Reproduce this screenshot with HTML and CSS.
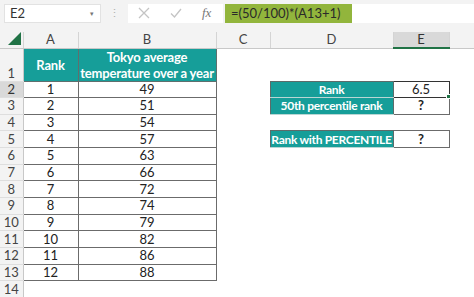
FILE: index.html
```html
<!DOCTYPE html>
<html lang="en">
<head>
    <meta charset="UTF-8">
    <meta name="viewport" content="width=device-width, initial-scale=1.0">
    <title>Percentile rank</title>
    <link rel="stylesheet" href="styles.css">
</head>
<body>
<div class="app">
    <div class="formula-bar">
        <div class="name-box">
            <span>E2</span>
            <span class="caret">&#9662;</span>
        </div>
        <div class="grip">&#8942;</div>
        <div class="fx-buttons">
            <svg width="12" height="12" viewBox="0 0 12 12"><path d="M1 1 L11 11 M11 1 L1 11" stroke="#c4c4c4" stroke-width="1.3" fill="none"/></svg>
            <svg width="12" height="12" viewBox="0 0 12 12"><path d="M1 6.5 L4.5 10 L11 2" stroke="#c4c4c4" stroke-width="1.3" fill="none"/></svg>
            <span class="fx">fx</span>
        </div>
        <div class="formula"><span class="formula-text">=(50/100)*(A13+1)</span></div>
    </div>

    <table class="sheet">
        <colgroup>
            <col class="c-rh">
            <col class="c-a">
            <col class="c-b">
            <col class="c-c">
            <col class="c-d">
            <col class="c-e">
            <col>
        </colgroup>
        <tr class="head-row">
            <th class="corner">
                <svg width="14" height="14" viewBox="0 0 14 14"><polygon points="13,0 13,13 0,13" fill="#217346"/></svg>
            </th>
            <th class="ch">A</th>
            <th class="ch">B</th>
            <th class="ch">C</th>
            <th class="ch">D</th>
            <th class="ch active">E</th>
            <th class="ch last"></th>
        </tr>
        <tr class="tall">
            <th class="rh">1</th>
            <td class="teal">Rank</td>
            <td class="teal">Tokyo average<br>temperature over a year</td>
            <td></td><td></td><td></td><td></td>
        </tr>
        <tr>
            <th class="rh active">2</th>
            <td class="data">1</td><td class="data">49</td>
            <td></td>
            <td class="teal label">Rank</td>
            <td class="value selected">6.5<span class="handle"></span></td>
            <td></td>
        </tr>
        <tr>
            <th class="rh">3</th>
            <td class="data">2</td><td class="data">51</td>
            <td></td>
            <td class="teal label">50th percentile rank</td>
            <td class="value bold">?</td>
            <td></td>
        </tr>
        <tr>
            <th class="rh">4</th>
            <td class="data">3</td><td class="data">54</td>
            <td></td><td></td><td></td><td></td>
        </tr>
        <tr>
            <th class="rh">5</th>
            <td class="data">4</td><td class="data">57</td>
            <td></td>
            <td class="teal label">Rank with PERCENTILE</td>
            <td class="value bold">?</td>
            <td></td>
        </tr>
        <tr>
            <th class="rh">6</th>
            <td class="data">5</td><td class="data">63</td>
            <td></td><td></td><td></td><td></td>
        </tr>
        <tr>
            <th class="rh">7</th>
            <td class="data">6</td><td class="data">66</td>
            <td></td><td></td><td></td><td></td>
        </tr>
        <tr>
            <th class="rh">8</th>
            <td class="data">7</td><td class="data">72</td>
            <td></td><td></td><td></td><td></td>
        </tr>
        <tr>
            <th class="rh">9</th>
            <td class="data">8</td><td class="data">74</td>
            <td></td><td></td><td></td><td></td>
        </tr>
        <tr>
            <th class="rh">10</th>
            <td class="data">9</td><td class="data">79</td>
            <td></td><td></td><td></td><td></td>
        </tr>
        <tr>
            <th class="rh">11</th>
            <td class="data">10</td><td class="data">82</td>
            <td></td><td></td><td></td><td></td>
        </tr>
        <tr>
            <th class="rh">12</th>
            <td class="data">11</td><td class="data">86</td>
            <td></td><td></td><td></td><td></td>
        </tr>
        <tr>
            <th class="rh">13</th>
            <td class="data">12</td><td class="data">88</td>
            <td></td><td></td><td></td><td></td>
        </tr>
        <tr>
            <th class="rh">14</th>
            <td></td><td></td><td></td><td></td><td></td><td></td>
        </tr>
    </table>
</div>
</body>
</html>
```

FILE: styles.css
```css
body {
    margin: 0;
    padding: 0;
    font-family: Lato, "Open Sans", sans-serif;
    background-color: #fff;
    color: #222;
}

.app {
    width: 474px;
    height: 297px;
    overflow: hidden;
    background-color: #fff;
}

/* formula bar */
.formula-bar {
    display: flex;
    align-items: center;
    height: 32px;
    padding: 0 0 6px 4px;
    box-sizing: border-box;
    background-color: #f3f3f3;
}

.name-box {
    display: flex;
    justify-content: space-between;
    align-items: center;
    width: 97px;
    height: 19px;
    padding: 0 6px 0 5px;
    box-sizing: border-box;
    background-color: #fff;
    border: 1px solid #e2e2e2;
    font-size: 13px;
    color: #333;
}

.caret {
    font-size: 7px;
    color: #777;
}

.grip {
    width: 27px;
    text-align: center;
    font-size: 11px;
    color: #b0b0b0;
}

.fx-buttons {
    display: flex;
    align-items: center;
    gap: 20px;
    width: 95px;
    height: 19px;
    padding-left: 10px;
    box-sizing: border-box;
    background-color: #fff;
}

.fx {
    font-family: "Liberation Serif", serif;
    font-style: italic;
    font-size: 13px;
    color: #777;
}

.formula {
    flex: 1;
    height: 19px;
    margin-left: 2px;
    background-color: #fff;
    display: flex;
    align-items: center;
}

.formula-text {
    display: block;
    width: 127px;
    height: 19px;
    line-height: 19px;
    padding-left: 6px;
    box-sizing: border-box;
    background-color: #92b53c;
    font-size: 13px;
    color: #2a2a2a;
}

/* sheet */
.sheet {
    width: 474px;
    table-layout: fixed;
    border-collapse: collapse;
    font-size: 13px;
}

.c-rh { width: 23px; }
.c-a { width: 55px; }
.c-b { width: 138px; }
.c-c { width: 54px; }
.c-d { width: 123px; }
.c-e { width: 56px; }

.sheet th,
.sheet td {
    padding: 0;
    text-align: center;
    vertical-align: middle;
    line-height: 15px;
    white-space: nowrap;
}

.sheet tr {
    height: 16.67px;
}

.sheet tr.head-row {
    height: 16px;
}

.sheet tr.tall {
    height: 33px;
}

.corner {
    background-color: #f3f3f3;
    border-right: 1px solid #d4d4d4;
    border-bottom: 1px solid #c8c8c8;
    text-align: right;
    vertical-align: bottom;
}

.corner svg {
    display: block;
    margin: 0 1px 1px auto;
}

.ch {
    background-color: #f3f3f3;
    border-right: 1px solid #d4d4d4;
    border-bottom: 1px solid #c8c8c8;
    font-weight: normal;
    color: #444;
}

.ch.active {
    background-color: #d9d9d9;
    border-bottom: 2px solid #217346;
    color: #333;
}

.ch.last {
    border-right: none;
}

.rh {
    background-color: #f3f3f3;
    border-right: 1px solid #c8c8c8;
    border-bottom: 1px solid #dedede;
    font-weight: normal;
    color: #444;
}

.tall .rh {
    vertical-align: bottom;
}

.rh.active {
    background-color: #d9d9d9;
    color: #333;
}

.teal {
    background-color: #169e99;
    color: #fff;
    font-weight: bold;
    letter-spacing: -0.2px;
    border: 1px solid #5f6f6e;
}

.tall .teal {
    line-height: 16px;
}

.teal.label {
    font-size: 12px;
    letter-spacing: -0.3px;
    border-color: #5d6b6a;
    border-bottom-color: #b9d6d4;
}

.data {
    border: 1px solid #6b6b6b;
    color: #222;
}

.value {
    position: relative;
    border: 1px solid #6b6b6b;
    color: #222;
}

.value.bold {
    font-weight: bold;
}

.value.selected {
    border: 1px solid #333;
}

.handle {
    position: absolute;
    right: -2px;
    bottom: -2px;
    width: 3px;
    height: 3px;
    background-color: #217346;
    border: 1px solid #fff;
}
```
